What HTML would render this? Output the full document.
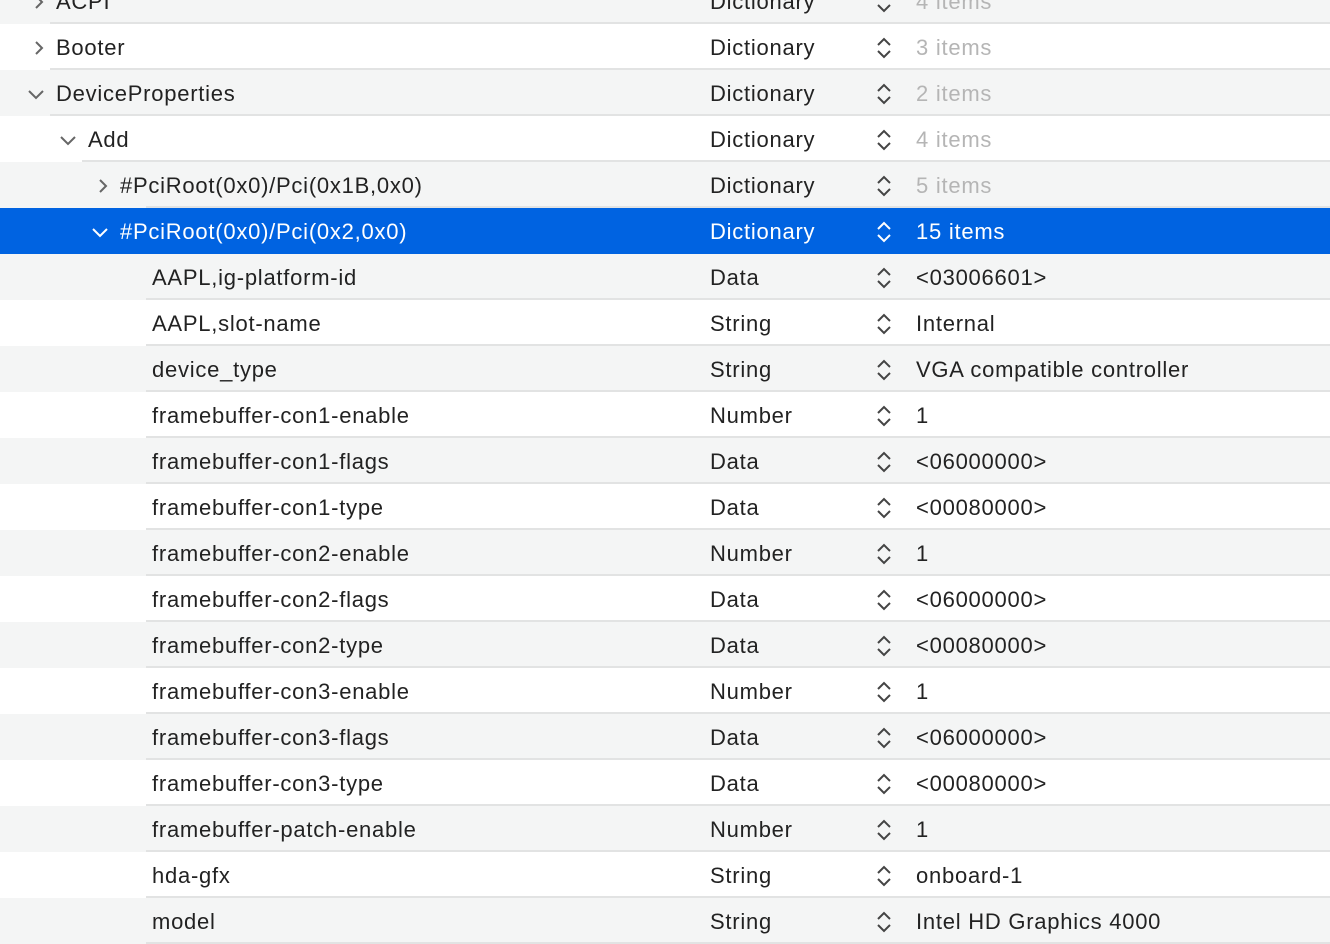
<!DOCTYPE html>
<html><head><style>
body{margin:0;width:1330px;height:940px;overflow:hidden;background:#fff;font-family:"Liberation Sans",sans-serif;font-size:22px;color:#222;position:relative}
.r{position:absolute;left:0;width:1330px;height:46px}
.g{background:#f4f5f5}
.w{background:#fff}
.s{background:#0063e1;color:#fff}
.ln{position:absolute;right:0;bottom:0;height:2px;background:#e2e3e3}
.t{position:absolute;top:13px;white-space:nowrap;line-height:22px;letter-spacing:0.75px}
.ty{left:710px}
.v{left:916px}
.gr{color:#b5b5b5}
svg{position:absolute}
</style></head><body>
<div id="c"></div>
<script>
const rows=[
["ACPI",56,"Dictionary","4 items",1,"r",50],
["Booter",56,"Dictionary","3 items",1,"r",50],
["DeviceProperties",56,"Dictionary","2 items",1,"d",50],
["Add",88,"Dictionary","4 items",1,"d",82],
["#PciRoot(0x0)/Pci(0x1B,0x0)",120,"Dictionary","5 items",1,"r",146],
["#PciRoot(0x0)/Pci(0x2,0x0)",120,"Dictionary","15 items",0,"d",-1],
["AAPL,ig-platform-id",152,"Data","<03006601>",0,"",146],
["AAPL,slot-name",152,"String","Internal",0,"",146],
["device_type",152,"String","VGA compatible controller",0,"",146],
["framebuffer-con1-enable",152,"Number","1",0,"",146],
["framebuffer-con1-flags",152,"Data","<06000000>",0,"",146],
["framebuffer-con1-type",152,"Data","<00080000>",0,"",146],
["framebuffer-con2-enable",152,"Number","1",0,"",146],
["framebuffer-con2-flags",152,"Data","<06000000>",0,"",146],
["framebuffer-con2-type",152,"Data","<00080000>",0,"",146],
["framebuffer-con3-enable",152,"Number","1",0,"",146],
["framebuffer-con3-flags",152,"Data","<06000000>",0,"",146],
["framebuffer-con3-type",152,"Data","<00080000>",0,"",146],
["framebuffer-patch-enable",152,"Number","1",0,"",146],
["hda-gfx",152,"String","onboard-1",0,"",146],
["model",152,"String","Intel HD Graphics 4000",0,"",146]];
const esc=s=>s.replace(/&/g,"&amp;").replace(/</g,"&lt;").replace(/>/g,"&gt;");
let h="";
rows.forEach((r,i)=>{
 const top=-22+i*46;const sel=i==5;
 const cls=sel?"s":(i%2==0?"g":"w");
 const col=sel?"#fff":"#666";
 let ch="";
 if(r[5]=="r"){const x=r[1]-23;ch=`<svg style="left:${x}px;top:16px" width="12" height="16"><path d="M3 2 L9 8 L3 14" fill="none" stroke="${col}" stroke-width="2"/></svg>`;}
 if(r[5]=="d"){const x=r[1]-29;ch=`<svg style="left:${x}px;top:18px" width="18" height="12"><path d="M2 3 L9 10 L16 3" fill="none" stroke="${col}" stroke-width="2"/></svg>`;}
 const ud=`<svg style="left:876px;top:12px" width="16" height="24"><path d="M2 9 L8 3 L14 9 M2 15 L8 21 L14 15" fill="none" stroke="${sel?'#fff':'#444'}" stroke-width="2"/></svg>`;
 h+=`<div class="r ${cls}" style="top:${top}px">${r[6]>=0?`<div class="ln" style="left:${r[6]}px"></div>`:""}${ch}<div class="t" style="left:${r[1]}px">${esc(r[0])}</div><div class="t ty">${r[2]}</div>${ud}<div class="t v ${r[4]&&!sel?'gr':''}">${esc(r[3])}</div></div>`;
});
document.getElementById("c").innerHTML=h;
</script>
</body></html>
